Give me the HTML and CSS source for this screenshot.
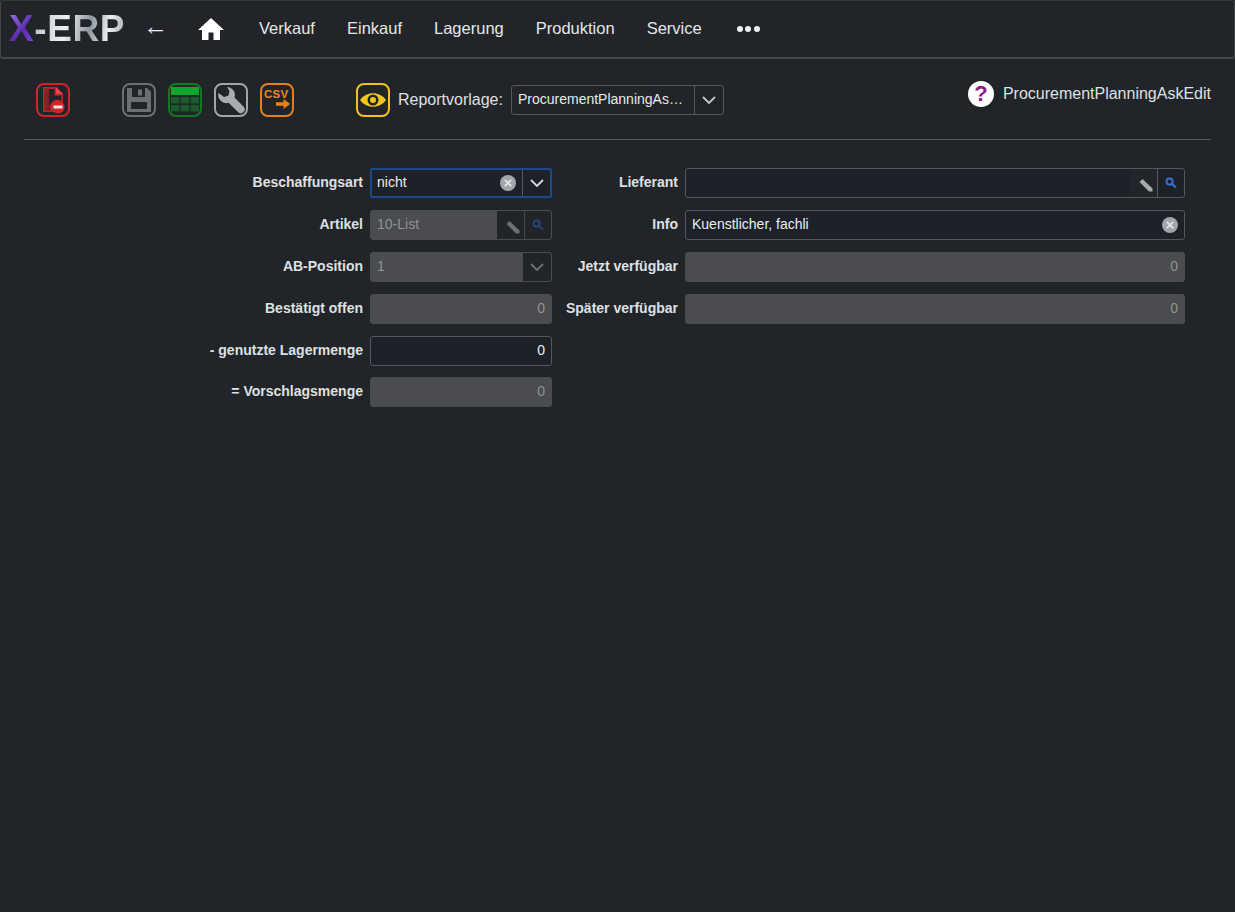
FILE: index.html
```html
<!DOCTYPE html>
<html lang="de">
<head>
    <meta charset="UTF-8">
    <title>ProcurementPlanningAskEdit</title>
    <link rel="stylesheet" href="styles.css">
</head>
<body>
    <nav class="navbar">
        <div class="logo"><span class="logo-x">X</span><span class="logo-erp">-ERP</span></div>
        <span class="back-arrow">←</span>
        <svg class="home-icon" viewBox="0 0 26 22"><path d="M13 0 L26 12 H22 V22 H15.5 V14.5 H10.5 V22 H4 V12 H0 Z" fill="#fff"/></svg>
        <ul class="nav-items">
            <li>Verkauf</li>
            <li>Einkauf</li>
            <li>Lagerung</li>
            <li>Produktion</li>
            <li>Service</li>
        </ul>
        <div class="nav-more"><i></i><i></i><i></i></div>
    </nav>

    <div class="toolbar">
        <button class="tool-btn tool-red">
            <svg viewBox="0 0 30 30" width="30" height="30">
                <path d="M5 2 H18 L25 9 V27 H5 Z" fill="#c0242b"/>
                <path d="M6.5 3.5 H11 V25.5 H6.5 Z" fill="#7d2429"/>
                <path d="M18 2 V9 H25 Z" fill="#e8454c"/>
                <path d="M11 4 H16.5 V10.5 H23.3 V16 A7.5 7.5 0 0 0 12.5 25.5 H11 Z" fill="#212529"/>
                <circle cx="20" cy="22" r="6.5" fill="#d3222a"/>
                <rect x="15.5" y="20.5" width="9" height="3" fill="#f4dede"/>
            </svg>
        </button>
        <button class="tool-btn tool-gray tool-first">
            <svg viewBox="0 0 30 30" width="30" height="30">
                <path d="M3 3 H23 L27 7 V27 H3 Z" fill="#6c6f72"/>
                <rect x="8" y="3" width="13" height="9" fill="#212529"/>
                <rect x="14" y="4.5" width="4" height="6" fill="#6c6f72"/>
                <rect x="7" y="17" width="16" height="7" fill="#212529"/>
            </svg>
        </button>
        <button class="tool-btn tool-green">
            <svg viewBox="0 0 30 30" width="30" height="30">
                <rect x="1" y="2" width="28" height="8" fill="#10a52c"/>
                <g fill="#1b5a2b">
                    <rect x="1" y="12" width="8.5" height="6.5"/><rect x="10.8" y="12" width="8.5" height="6.5"/><rect x="20.5" y="12" width="8.5" height="6.5"/>
                    <rect x="1" y="20" width="8.5" height="6.5"/><rect x="10.8" y="20" width="8.5" height="6.5"/><rect x="20.5" y="20" width="8.5" height="6.5"/>
                </g>
            </svg>
        </button>
        <button class="tool-btn tool-silver">
            <svg viewBox="0 0 30 30" width="30" height="30">
                <path d="M11 2 A8 8 0 0 1 18.5 12.5 L27.5 21.5 A3.5 3.5 0 0 1 22 27 L12.5 17.8 A8 8 0 0 1 2.5 8 L8 12 L12.5 10.5 L13.5 6 Z" fill="#a9abae"/>
            </svg>
        </button>
        <button class="tool-btn tool-orange">
            <span class="csv-label">CSV</span>
            <svg class="csv-arrow" viewBox="0 0 18 12" width="15" height="10"><path d="M0 4 H9 V0 L17 6 L9 12 V8 H0 Z" fill="#f07f13"/></svg>
        </button>
        <button class="tool-btn tool-yellow">
            <svg viewBox="0 0 30 30" width="30" height="30">
                <path d="M2 15 C8 6 22 6 28 15 C22 24 8 24 2 15 Z" fill="#f5c518"/>
                <circle cx="15" cy="15" r="5.5" fill="#212529"/>
                <circle cx="15" cy="15" r="3" fill="#f5c518"/>
            </svg>
        </button>
        <label class="report-label">Reportvorlage:</label>
        <div class="report-select">
            <span class="report-value">ProcurementPlanningAs…</span>
            <span class="addon"><svg class="chevron" viewBox="0 0 14 8"><path d="M1 1 L7 7 L13 1" fill="none" stroke="#c4c6c8" stroke-width="1.8"/></svg></span>
        </div>
        <div class="help">
            <span class="help-icon">?</span>
            <span class="help-text">ProcurementPlanningAskEdit</span>
        </div>
    </div>
    <hr class="divider">

    <form class="edit-form">
        <label>Beschaffungsart</label>
        <div class="field field-focus">
            <span class="field-text">nicht</span>
            <span class="clear-btn">
                <svg viewBox="0 0 16 16"><circle cx="8" cy="8" r="8" fill="#a2a5a9"/><path d="M4.8 4.8 L11.2 11.2 M11.2 4.8 L4.8 11.2" stroke="#e4e5e6" stroke-width="1.8"/></svg>
            </span>
            <span class="addon"><svg class="chevron" viewBox="0 0 14 8"><path d="M1 1 L7 7 L13 1" fill="none" stroke="#d6d8da" stroke-width="1.8"/></svg></span>
        </div>
        <label>Lieferant</label>
        <div class="field">
            <span class="field-text"></span>
            <span class="addon-pencil"><svg viewBox="0 0 14 14"><path d="M0.5 4 L3.5 1 L13.5 10.5 V13.5 H10 Z" fill="#a8aaad"/></svg></span>
            <span class="addon addon-search"><svg viewBox="0 0 12 12"><circle cx="4.6" cy="4.6" r="3.1" fill="none" stroke="#3d6fd8" stroke-width="1.9"/><path d="M7 7 L11 10.5" stroke="#3d6fd8" stroke-width="2"/></svg></span>
        </div>

        <label>Artikel</label>
        <div class="field field-readonly">
            <span class="field-text">10-List</span>
            <span class="addon-pencil"><svg viewBox="0 0 14 14"><path d="M0.5 4 L3.5 1 L13.5 10.5 V13.5 H10 Z" fill="#6e7073"/></svg></span>
            <span class="addon addon-search addon-dim"><svg viewBox="0 0 12 12"><circle cx="4.6" cy="4.6" r="3.1" fill="none" stroke="#2b4377" stroke-width="1.9"/><path d="M7 7 L11 10.5" stroke="#2b4377" stroke-width="2"/></svg></span>
        </div>
        <label>Info</label>
        <div class="field">
            <span class="field-text">Kuenstlicher, fachli</span>
            <span class="clear-btn">
                <svg viewBox="0 0 16 16"><circle cx="8" cy="8" r="8" fill="#a2a5a9"/><path d="M4.8 4.8 L11.2 11.2 M11.2 4.8 L4.8 11.2" stroke="#e4e5e6" stroke-width="1.8"/></svg>
            </span>
        </div>

        <label>AB-Position</label>
        <div class="field field-readonly">
            <span class="field-text">1</span>
            <span class="addon addon-plain addon-dim"><svg class="chevron" viewBox="0 0 14 8"><path d="M1 1 L7 7 L13 1" fill="none" stroke="#6e7073" stroke-width="1.8"/></svg></span>
        </div>
        <label>Jetzt verfügbar</label>
        <div class="field field-readonly field-number"><span class="field-text">0</span></div>

        <label>Bestätigt offen</label>
        <div class="field field-readonly field-number"><span class="field-text">0</span></div>
        <label>Später verfügbar</label>
        <div class="field field-readonly field-number"><span class="field-text">0</span></div>

        <label>- genutzte Lagermenge</label>
        <div class="field field-number"><span class="field-text">0</span></div>
        <span></span><span></span>

        <label class="row-last">= Vorschlagsmenge</label>
        <div class="field field-readonly field-number row-last"><span class="field-text">0</span></div>
    </form>
</body>
</html>
```

FILE: styles.css
```css
body{
    margin:0;
    padding:0;
    height:912px;
    overflow:hidden;
    font-family:"Liberation Sans", Arial, sans-serif;
    font-size:14px;
    background-color:#212529;
    color:#e4e5e6;
}

.navbar{
    box-sizing:border-box;
    height:59px;
    padding-bottom:1px;
    display:flex;
    align-items:center;
    border:1px solid #43474b;
    border-bottom-width:2px;
    border-top-color:#33373b;
    border-radius:3px;
    background-color:#212429;
}

.logo{
    margin-left:8px;
    width:120px;
    font-size:37px;
    font-weight:bold;
    letter-spacing:0.6px;
    line-height:56px;
    white-space:nowrap;
}

.logo-x{
    background:linear-gradient(135deg, #a585e8 0%, #5a2bb0 55%, #8450d8 100%);
    -webkit-background-clip:text;
    background-clip:text;
    color:transparent;
}

.logo-erp{
    background:linear-gradient(100deg, #b8c0c6 0%, #eef1f3 35%, #8f979d 60%, #eceff1 80%, #9aa2a8 100%);
    -webkit-background-clip:text;
    background-clip:text;
    color:transparent;
}

.back-arrow{
    margin:0 0 4px 14px;
    width:55px;
    font-size:25px;
    color:#eceded;
}

.home-icon{
    width:26px;
    height:22px;
}

.nav-items{
    list-style:none;
    display:flex;
    gap:32px;
    margin:0 0 0 35px;
    padding:0;
    font-size:16.5px;
    color:#e6e7e8;
}

.nav-more{
    display:flex;
    gap:2.5px;
    margin-left:35px;
}

.nav-more i{
    width:6px;
    height:6px;
    border-radius:50%;
    background-color:#f0f0f0;
}

.toolbar{
    display:flex;
    align-items:flex-start;
    padding:24px 24px 0 36px;
}

.tool-btn{
    position:relative;
    box-sizing:border-box;
    width:34px;
    height:34px;
    margin:0 12px 0 0;
    padding:0;
    border:2px solid;
    border-radius:8px;
    background:none;
    display:flex;
    align-items:center;
    justify-content:center;
}

.tool-red{ border-color:#d3222a; }
.tool-gray{ border-color:#6c6f72; }
.tool-green{ border-color:#0e7a24; }
.tool-silver{ border-color:#a2a5a8; }
.tool-orange{ border-color:#e57f1c; margin-right:62px; }
.tool-yellow{ border-color:#f0c419; margin-right:8px; }
.tool-first{ margin-left:40px; }

.csv-label{
    position:absolute;
    left:2px;
    top:3px;
    font-size:11.5px;
    font-weight:bold;
    letter-spacing:0.3px;
    color:#f08a1d;
}

.csv-arrow{
    position:absolute;
    right:1px;
    bottom:6px;
}

.report-label{
    margin-top:8px;
    font-size:16px;
    color:#dfe0e1;
}

.report-select{
    box-sizing:border-box;
    display:flex;
    width:213px;
    height:30px;
    margin:2px 0 0 8px;
    border:1px solid #54585c;
    border-radius:3px;
}

.report-value{
    flex:1;
    min-width:0;
    padding-left:6px;
    line-height:27px;
    white-space:nowrap;
    color:#e8e9ea;
}

.addon{
    display:flex;
    align-items:center;
    justify-content:center;
    flex:none;
    width:28px;
    border-left:1px solid #54585c;
}

.chevron{
    width:14px;
    height:8px;
}

.help{
    display:flex;
    align-items:center;
    margin-left:auto;
    margin-top:-2px;
}

.help-icon{
    width:26px;
    height:26px;
    border-radius:50%;
    background-color:#fff;
    color:#8a1a8a;
    font-size:22px;
    font-weight:bold;
    line-height:26px;
    text-align:center;
}

.help-text{
    margin-left:9px;
    font-size:16px;
    color:#dfe0e1;
}

.divider{
    height:1px;
    margin:22px 24px 0;
    border:0;
    background-color:#54585c;
}

.edit-form{
    display:grid;
    grid-template-columns:346px 182px 133px 500px;
    grid-auto-rows:30px;
    row-gap:12px;
    padding:28px 0 0 24px;
}

.edit-form label{
    padding-right:7px;
    line-height:28px;
    text-align:right;
    font-weight:bold;
    font-size:14px;
    color:#dfe0e2;
    white-space:nowrap;
}

.edit-form .row-last{
    margin-top:-1px;
}

.field{
    box-sizing:border-box;
    display:flex;
    align-items:stretch;
    height:30px;
    border:1px solid #54585c;
    border-radius:3px;
    background-color:#1d2228;
    overflow:hidden;
}

.field-text{
    flex:1;
    min-width:0;
    padding:0 6px;
    line-height:27px;
    color:#eceded;
}

.field-focus{
    border:2px solid #1b4a86;
    box-shadow:0 0 1px #1b4a86;
}

.field-focus .field-text{
    padding-left:5px;
    line-height:25px;
}

.field-focus .addon{
    width:27px;
}

.field-readonly{
    background-color:#4a4c4f;
    border-color:#4a4c4f;
}

.field-readonly .field-text{
    color:#909294;
}

.field-number .field-text{
    text-align:right;
}

.clear-btn{
    display:flex;
    align-items:center;
    flex:none;
    padding:0 6px;
}

.clear-btn svg{
    width:16px;
    height:16px;
}

.addon-pencil{
    display:flex;
    align-items:center;
    justify-content:center;
    flex:none;
    width:27px;
    background-color:#212529;
}

.addon-pencil svg{
    width:14px;
    height:14px;
    margin:3px 0 0 5px;
}

.addon-search{
    width:26px;
}

.addon-search svg{
    width:12px;
    height:12px;
}

.addon-dim{
    background-color:#212529;
    border-left-color:#44474b;
}

.addon-plain{
    border-left:0;
}
```
